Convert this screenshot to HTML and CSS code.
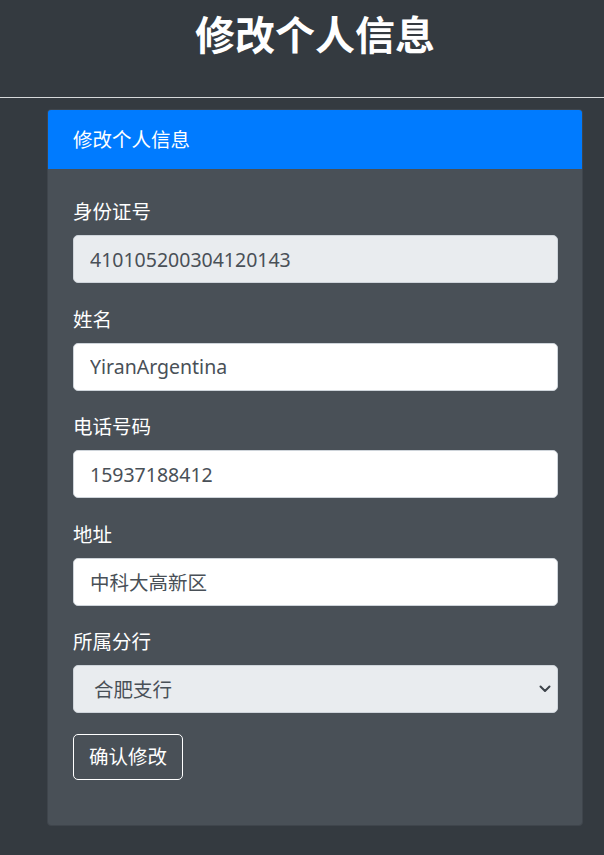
FILE: index.html
```html
<!DOCTYPE html>
<html lang="zh-CN">
<head>
<meta charset="utf-8">
<title>修改个人信息</title>
<link rel="stylesheet" href="styles.css">
</head>
<body>
<header class="page-header">
  <h1 class="page-title">修改个人信息</h1>
</header>
<hr class="divider">
<main class="wrap">
  <section class="card">
    <div class="card-header">修改个人信息</div>
    <form class="card-body">
      <div class="form-group">
        <label class="form-label">身份证号</label>
        <input class="form-control" type="text" value="410105200304120143" disabled>
      </div>
      <div class="form-group">
        <label class="form-label">姓名</label>
        <input class="form-control" type="text" value="YiranArgentina">
      </div>
      <div class="form-group">
        <label class="form-label">电话号码</label>
        <input class="form-control" type="text" value="15937188412">
      </div>
      <div class="form-group">
        <label class="form-label">地址</label>
        <input class="form-control" type="text" value="中科大高新区">
      </div>
      <div class="form-group">
        <label class="form-label">所属分行</label>
        <div class="select-wrap">
          <select class="form-select">
            <option>合肥支行</option>
          </select>
          <svg class="chevron" width="12" height="8" viewBox="0 0 12 8" aria-hidden="true">
            <path d="M1.5 1.5 L6 6 L10.5 1.5" fill="none" stroke="#3d434a" stroke-width="2" stroke-linecap="round" stroke-linejoin="round"/>
          </svg>
        </div>
      </div>
      <button class="btn-outline" type="button">确认修改</button>
    </form>
  </section>
</main>
</body>
</html>
```
FILE: styles.css
```css
* { box-sizing: border-box; }
html, body {
  margin: 0;
  padding: 0;
  background: #343a40;
  font-family: "Noto Sans", "Open Sans", "Noto Sans CJK SC", sans-serif;
  color: #fff;
}
.page-header {
  height: 97px;
  padding-top: 11px;
  padding-left: 26px;
  text-align: center;
}
.page-title {
  margin: 0;
  font-size: 40px;
  line-height: 48px;
  font-weight: 700;
  color: #fff;
}
.divider {
  margin: 0;
  border: 0;
  height: 1px;
  background: #d6d8da;
}
.wrap {
  padding: 11px 21px 30px 47px;
}
.card {
  background: #495057;
  border: 1px solid #3f454c;
  border-radius: 4px;
  overflow: hidden;
}
.card-header {
  background: #007bff;
  height: 59px;
  padding: 0 24px 0 25px;
  font-size: 19.5px;
  line-height: 59px;
  color: #fff;
}
.card-body {
  margin: 0;
  padding: 28px 24px 45px 25px;
}
.form-group {
  margin-bottom: 21.5px;
}
.form-label {
  display: block;
  font-size: 19.5px;
  line-height: 30px;
  margin-bottom: 8px;
  color: #fff;
}
.form-control,
.form-select {
  display: block;
  width: 100%;
  height: 48px;
  padding: 0 16px;
  font-family: inherit;
  font-size: 19.5px;
  color: #495057;
  background: #fff;
  border: 1px solid #ced4da;
  border-radius: 5px;
  outline: none;
}
.form-control:disabled {
  background: #e9ecef;
  color: #495057;
  opacity: 1;
  -webkit-text-fill-color: #495057;
}
.select-wrap {
  position: relative;
}
.form-select {
  -webkit-appearance: none;
  appearance: none;
  background: #e9ecef;
  padding-left: 20px;
}
.chevron {
  position: absolute;
  right: 7px;
  top: 20px;
}
.btn-outline {
  display: inline-block;
  height: 46px;
  margin-top: -1px;
  padding: 0 15px;
  font-family: inherit;
  font-size: 19.5px;
  line-height: 44px;
  color: #fff;
  background: transparent;
  border: 1px solid #fff;
  border-radius: 5px;
}
```
